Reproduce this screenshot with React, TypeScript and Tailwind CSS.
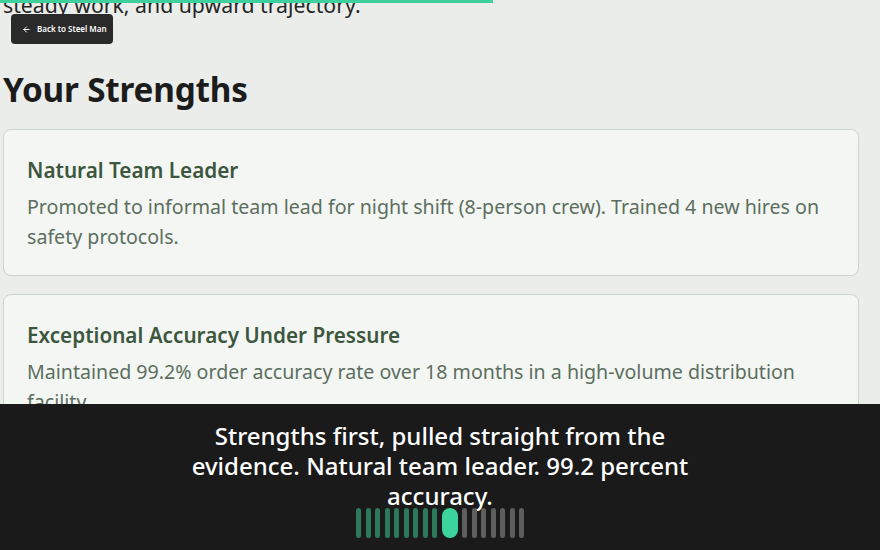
import React from "react";

const font = { fontFamily: '"Noto Sans", "Open Sans", sans-serif' };

function Bars() {
  const dark = Array.from({ length: 9 });
  const gray = Array.from({ length: 7 });
  return (
    <div className="flex justify-center items-center gap-[4.5px] h-[30px] -mt-[3px]">
      {dark.map((_, i) => (
        <div key={"d" + i} className="w-[5px] h-[30px] rounded-full bg-[#2c7a5b]" />
      ))}
      <div className="w-[16px] h-[30px] rounded-full bg-[#3dd39c]" />
      {gray.map((_, i) => (
        <div key={"g" + i} className="w-[5px] h-[30px] rounded-full bg-[#5e5e5e]" />
      ))}
    </div>
  );
}

function Card({ title, body }: { title: string; body: string }) {
  return (
    <div className="rounded-[8px] border border-[#cbd6cb] bg-[#f3f6f2] pl-[23px] pr-[22px] pt-[26px] pb-6">
      <div className="text-[20.7px] leading-[28px] font-semibold text-[#3c573e]">{title}</div>
      <div className="mt-[8px] text-[19.6px] leading-[29.5px] text-[#5d6e60]">{body}</div>
    </div>
  );
}

export default function App() {
  return (
    <div className="relative w-[880px] h-[550px] overflow-hidden bg-[#ebedeb]" style={font}>
      <div className="ml-[3px] w-[856px] -mt-[10px]">
        <div className="text-[21.25px] leading-[30px] text-[#262626]">
          steady work, and upward trajectory.
        </div>
        <h1 className="mt-[47px] text-[33.3px] leading-[44px] font-bold text-[#1c1c1c] tracking-[-0.2px]">
          Your Strengths
        </h1>
        <div className="mt-[18px] flex flex-col gap-[18px]">
          <Card
            title="Natural Team Leader"
            body="Promoted to informal team lead for night shift (8-person crew). Trained 4 new hires on safety protocols."
          />
          <Card
            title="Exceptional Accuracy Under Pressure"
            body="Maintained 99.2% order accuracy rate over 18 months in a high-volume distribution facility."
          />
        </div>
      </div>

      <div className="absolute left-0 top-0 h-[3px] w-[493px] bg-[#3fd19d]" />

      <button className="absolute left-[11px] top-[14px] flex h-[30px] w-[102px] items-center gap-[6px] rounded-[4px] bg-[#2a2a2a] pl-[11px] text-[8px] font-semibold text-white">
        <svg width="9" height="9" viewBox="0 0 24 24" fill="none" stroke="white" strokeWidth="2.5" strokeLinecap="round" strokeLinejoin="round">
          <path d="M19 12H5" />
          <path d="M12 19l-7-7 7-7" />
        </svg>
        <span>Back to Steel Man</span>
      </button>

      <div className="absolute left-0 bottom-0 w-[880px] h-[146px] bg-[#1a1a1a] pt-[17px] flex flex-col items-center">
        <div className="max-w-[535px] text-center text-[24px] leading-[30px] font-medium text-white">
          Strengths first, pulled straight from the evidence. Natural team leader. 99.2 percent accuracy.
        </div>
        <Bars />
      </div>
    </div>
  );
}
